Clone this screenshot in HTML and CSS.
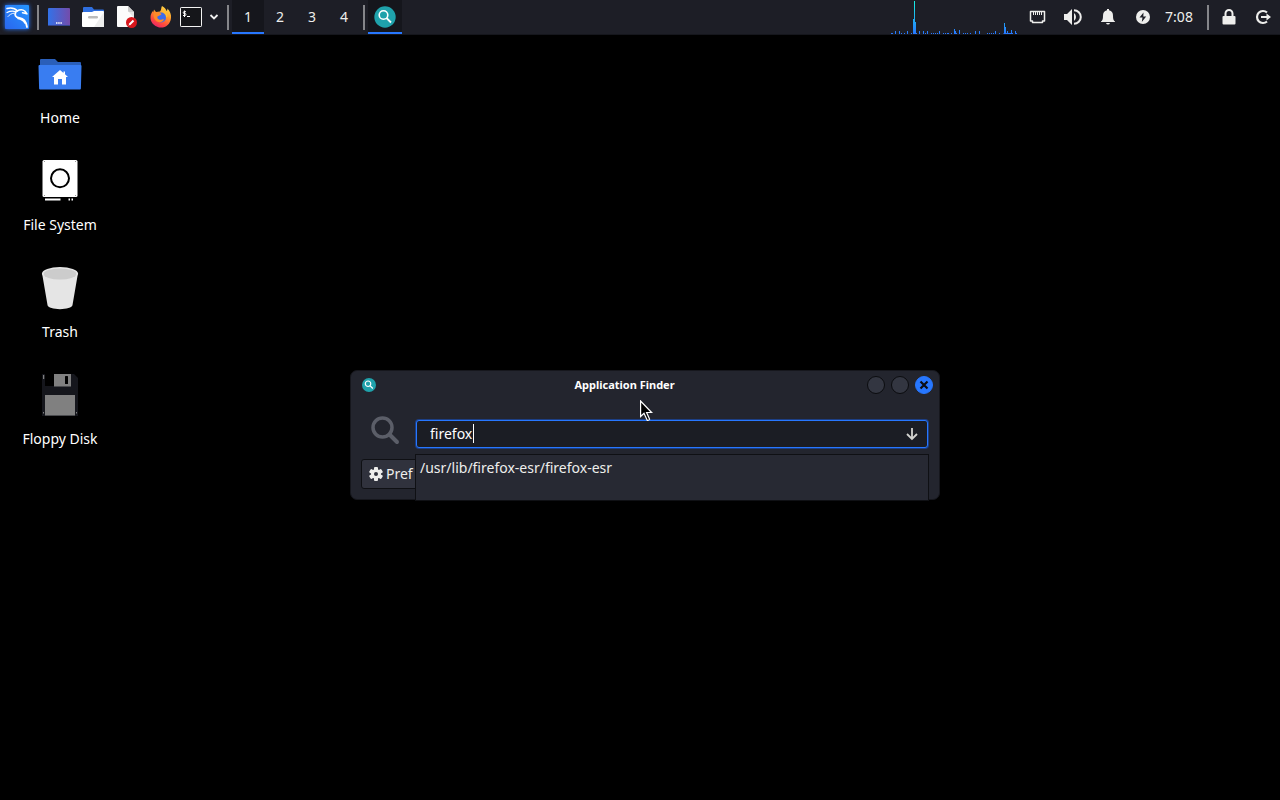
FILE: index.html
```
<!DOCTYPE html>
<html lang="en">
<head>
    <meta charset="UTF-8">
    <meta name="viewport" content="width=device-width, initial-scale=1.0">
    <title>Desktop - Application Finder</title>
    <link rel="stylesheet" href="styles.css">
</head>
<body>
    <!-- Top panel -->
    <header class="panel">
        <button class="launcher" aria-label="Applications menu">
            <svg class="kali" width="34" height="34" viewBox="0 0 34 34">
                <defs>
                    <linearGradient id="kaliBg" x1="0" y1="1" x2="1" y2="0">
                        <stop offset="0" stop-color="#2a66ee"/>
                        <stop offset="1" stop-color="#2596ff"/>
                    </linearGradient>
                </defs>
                <rect x="5" y="5" width="24" height="24" rx="1" fill="url(#kaliBg)"/>
                <g fill="none" stroke="#fff" stroke-linecap="round" stroke-linejoin="round">
                    <path d="M7 8.500c4-1 7.500-.8 10.500 2.500" stroke-width="1.500"/>
                    <path d="M7 12.500c3-1.500 6-1.700 9-.8" stroke-width="1.200"/>
                    <path d="M8 16.500c1.500-2 3.500-3 6-3.300" stroke-width=".9"/>
                    <path d="M17 11c3-1.700 6-1.500 8 .2l2 2.800c-1.500-1-3-1.200-4.500-1.300" stroke-width="1.500"/>
                    <path d="M16 11.500c-2 3.500-.5 6 3.500 6.500s6.500 3 7.500 9" stroke-width="1.800"/>
                    <path d="M18 18.500c3 .5 5.500 2 7 4.500" stroke-width="1.500"/>
                </g>
            </svg>
        </button>
        <span class="separator"></span>
        <button class="launcher" aria-label="Show desktop">
            <svg width="22" height="18" viewBox="0 0 22 18">
                <defs>
                    <linearGradient id="deskBg" x1="0" y1="0" x2="1" y2="0">
                        <stop offset="0" stop-color="#3272e8"/>
                        <stop offset="1" stop-color="#744cab"/>
                    </linearGradient>
                </defs>
                <rect width="22" height="18" rx="1" fill="url(#deskBg)"/>
                <path d="M0 17.500h22" stroke="#34458f"/>
                <path d="M8 15h6" stroke="#fff" stroke-width="1.500" stroke-dasharray="1.500 .7"/>
            </svg>
        </button>
        <button class="launcher" aria-label="File manager">
            <svg width="22" height="20" viewBox="0 0 22 20">
                <path d="M1 1q0-1 1-1h8l2 2.500h9q1 0 1 1V7H1z" fill="#2f6fe0"/>
                <path d="M0 6q0-1 1-1h9l2-1h9q1 0 1 1v14q0 1-1 1H1q-1 0-1-1z" fill="#fff"/>
                <path d="M22 5v15H12z" fill="#eee"/>
                <rect x="6" y="9" width="10" height="2.500" rx="1.200" fill="#bbb"/>
            </svg>
        </button>
        <button class="launcher" aria-label="Text editor">
            <svg width="20" height="22" viewBox="1 0 20 22">
                <path d="M2 0h10l6 6v14q0 1-1 1H2q-1 0-1-1V1q0-1 1-1z" fill="#fcfcfc"/>
                <path d="M12 0l6 6h-5q-1 0-1-1z" fill="#ccc"/>
                <path d="M13 6h5v6z" fill="#e5e5e5"/>
                <circle cx="15.500" cy="16.500" r="5.500" fill="#d8161c"/>
                <path d="M13.500 18.500l4-4" stroke="#fff" stroke-width="2"/>
                <path d="M12.300 19.700l1-2 1 1z" fill="#fff"/>
            </svg>
        </button>
        <button class="launcher" aria-label="Firefox">
            <svg width="22" height="22" viewBox="0 0 22 22">
                <defs>
                    <linearGradient id="foxBody" x1=".8" y1="0" x2=".3" y2="1">
                        <stop offset="0" stop-color="#ffe14a"/>
                        <stop offset=".4" stop-color="#ff9a2b"/>
                        <stop offset=".75" stop-color="#ff4a3d"/>
                        <stop offset="1" stop-color="#e8226a"/>
                    </linearGradient>
                </defs>
                <path d="M12 0c3 1.500 4 3.500 4.500 5 1-.5 1-2 .8-2.500C20 5 21.500 8.500 21 12c-.6 6-5 9.600-10 9.600S.6 17.500.5 12C.4 9 1.500 6.500 3 5l.3 1.500L4 3.500 6 6l4-.5c1.500-1.500 1-4 2-5.500z" fill="url(#foxBody)"/>
                <circle cx="11" cy="11.500" r="5" fill="#3d6cec"/>
                <path d="M4 6.500l5-.2L11.500 8c-1 1.500-3 1.500-4 2.500-.6 1 .2 2.500 1.500 3 2 .8 4-.8 5-.2-1 3-5.500 4-8 1.500C3.500 12.500 3 9 4 6.500z" fill="#ff8a28"/>
                <path d="M11 6c3-.5 5.500 2 5 5.500l1.500-1C17.500 7 15 4 11 6z" fill="#ffc12f"/>
            </svg>
        </button>
        <button class="launcher terminal" aria-label="Terminal">
            <svg width="22" height="20" viewBox="0 0 22 20">
                <rect x=".5" y=".5" width="21" height="19" rx=".7" fill="#15161a" stroke="#f4f4f4"/>
                <path d="M6 4.700H4q-.7 0-.7.700v.4q0 .7.700.7h1.200q.7 0 .7.700v.6q0 .7-.7.700H3M4.500 3.500v6.500" fill="none" stroke="#fff"/>
                <path d="M7 9.500h3" stroke="#fff"/>
            </svg>
        </button>
        <button class="launcher more" aria-label="More terminals">
            <svg width="10" height="6" viewBox="0 0 10 6">
                <path d="M1.500 1L5 4.500 8.500 1" fill="none" stroke="#f0f0f0" stroke-width="1.800"/>
            </svg>
        </button>
        <span class="separator"></span>
        <nav class="workspaces" aria-label="Workspaces">
            <button class="workspace active">1</button>
            <button class="workspace">2</button>
            <button class="workspace">3</button>
            <button class="workspace">4</button>
        </nav>
        <span class="separator"></span>
        <button class="launcher active" aria-label="Application Finder">
            <svg width="22" height="22" viewBox="0 0 22 22">
                <circle cx="11" cy="11" r="10.700" fill="#1fa2ab"/>
                <circle cx="9.500" cy="9" r="4.300" fill="none" stroke="#fff" stroke-width="1.600"/>
                <path d="M12.500 12l4.500 4.500" stroke="#fff" stroke-width="1.800"/>
            </svg>
        </button>

        <!-- CPU graph and status icons -->
        <svg class="graph" width="127" height="34" viewBox="0 0 127 34">
            <defs>
                <linearGradient id="cpu" gradientUnits="userSpaceOnUse" x1="0" y1="34" x2="0" y2="0">
                    <stop offset="0" stop-color="#2777ff"/>
                    <stop offset="1" stop-color="#17f5e0"/>
                </linearGradient>
            </defs>
            <path fill="url(#cpu)" d="M0 33h2v1H0zM4 31h1v3H4zM8 31h1v3H8zM10 33h1v1h-1zM13 33h1v1h-1zM16 31h1v3h-1zM20 33h1v1h-1zM22 19h1V1h1v21h1v11h1v1h-4zM28 31h1v3h-1zM32 31h1v3h-1zM34 33h1v1h-1zM36 31h1v3h-1zM40 33h1v1h-1zM42 33h1v1h-1zM44 33h1v1h-1zM46 33h1v1h-1zM48 31h1v3h-1zM52 33h1v1h-1zM54 33h1v1h-1zM56 33h2v1h-2zM60 33h1v1h-1zM63 29h1v2h1v2h1v1h-3zM68 30h1v4h-1zM72 33h1v1h-1zM74 33h1v1h-1zM76 33h1v1h-1zM79 33h1v1h-1zM84 31h1v3h-1zM88 31h1v3h-1zM96 33h1v1h-1zM98 33h1v1h-1zM100 33h1v1h-1zM102 33h1v1h-1zM104 31h1v3h-1zM108 33h1v1h-1zM112 33h1V23h1v4h1v6h1v-2h1v2h3v-3h1v3h1v1h-9zM124 31h1v2h1v1h-2z"/>
        </svg>
        <button class="tray" aria-label="Network">
            <svg width="17" height="15" viewBox="0 0 17 15">
                <path d="M1.500 1.500h14V11h-2v1.500h-10V11h-2z" fill="none" stroke="#eeeeec" stroke-width="1.500" stroke-linejoin="round"/>
                <path d="M4.500 2v3M6.500 2v3M8.500 2v3M10.500 2v3M12.500 2v3" stroke="#eeeeec"/>
            </svg>
        </button>
        <button class="tray" aria-label="Volume">
            <svg width="18" height="16" viewBox="0 0 18 16">
                <path d="M0 5h3l5-5v16l-5-5H0z" fill="#eeeeec"/>
                <path d="M10 4a5 5 0 0 1 0 8z" fill="#eeeeec"/>
                <path d="M10 1.200a6.800 6.800 0 0 1 0 13.600" fill="none" stroke="#eeeeec" stroke-width="2"/>
            </svg>
        </button>
        <button class="tray" aria-label="Notifications">
            <svg width="14" height="16" viewBox="0 0 14 16">
                <path d="M6 0h2v1.300c3 .5 4 2.700 4 5.700 0 3 .5 4.500 2 5.500V13H0v-.5c1.500-1 2-2.500 2-5.500 0-3 1-5.200 4-5.700zM5 14h4q-.5 1.500-2 1.500T5 14z" fill="#eeeeec"/>
            </svg>
        </button>
        <button class="tray" aria-label="Power manager">
            <svg width="14" height="14" viewBox="0 0 14 14">
                <circle cx="7" cy="7" r="7" fill="#eeeeec"/>
                <path d="M7.500 2.500l-4 5h3l-.7 4.500 4.400-5.500H7.300z" fill="#1d1e26"/>
            </svg>
        </button>
        <time class="clock">7:08</time>
        <span class="separator"></span>
        <button class="launcher" aria-label="Lock screen">
            <svg width="14" height="16" viewBox="0 0 14 16">
                <path d="M3.500 8V4.500a3.500 3.500 0 0 1 7 0V8" fill="none" stroke="#eeeeec" stroke-width="2"/>
                <rect x=".5" y="7" width="13" height="8.500" rx="1" fill="#eeeeec"/>
            </svg>
        </button>
        <button class="launcher" aria-label="Log out">
            <svg width="16" height="16" viewBox="0 0 16 16">
                <path d="M12 3.500A6 6 0 1 0 12 12.500" fill="none" stroke="#eeeeec" stroke-width="2.200"/>
                <path d="M6 7h5.500V4.500L16 8l-4.500 3.500V9H6z" fill="#eeeeec"/>
            </svg>
        </button>
    </header>

    <main class="desktop">
        <!-- Desktop icons -->
        <a class="icon" href="#home">
            <svg width="48" height="48" viewBox="0 0 48 48">
                <path d="M4 10q0-1 1-1h14l3 3h22q1 0 1 1v5H4z" fill="#2a5fba"/>
                <path d="M2.500 16q0-1 1-1h41q1 0 1 1l-.6 22.500q0 1-1 1H4.100q-1 0-1-1z" fill="#397df1"/>
                <path d="M24 20l3.500 3v-1.500H29v2.800l3 2.700h-2v7.500h-4v-5.500h-4v5.500h-4V27h-2z" fill="#fff"/>
            </svg>
            <span>Home</span>
        </a>
        <a class="icon" href="#filesystem">
            <svg width="48" height="48" viewBox="0 0 48 48">
                <rect x="6.500" y="3" width="35" height="37" rx="1.500" fill="#fff"/>
                <circle cx="24" cy="21.300" r="9" fill="none" stroke="#000" stroke-width="2"/>
                <path d="M9 41.500h15.500v2H9zM32.500 41.500h1.500v2h-1.500zM35.500 41.500H37v2h-1.500z" fill="#fff"/>
                <path d="M8 4.500h1M39 4.500h1M8 38.500h1M39 38.500h1" stroke="#999"/>
            </svg>
            <span>File System</span>
        </a>
        <a class="icon" href="#trash">
            <svg width="48" height="48" viewBox="0 0 48 48">
                <path d="M6 9l5.500 32c.5 5.500 24.500 5.500 25 0L42 9z" fill="#e5e5e5"/>
                <ellipse cx="24" cy="9.500" rx="18" ry="6.500" fill="#e5e5e5"/>
                <ellipse cx="24" cy="10" rx="16.300" ry="5.600" fill="#ccc"/>
            </svg>
            <span>Trash</span>
        </a>
        <a class="icon" href="#floppy">
            <svg width="48" height="48" viewBox="0 0 48 48">
                <path d="M6 3h32l4 4v38H6z" fill="#15161c"/>
                <path d="M9 3h9v12H9z" fill="#000"/>
                <path d="M18 3h17v12.500H18z" fill="#808080"/>
                <rect x="29" y="5" width="3" height="8" rx=".5" fill="#000"/>
                <path d="M9 24h30v20.500H9z" fill="#808080"/>
                <path d="M7 4h1.200v4H7zM7 41h1v1.500H7zM40 41h1v1.500h-1z" fill="#808080"/>
            </svg>
            <span>Floppy Disk</span>
        </a>

        <!-- Application Finder window -->
        <section class="window">
            <div class="titlebar">
                <svg width="14" height="14" viewBox="0 0 22 22">
                    <circle cx="11" cy="11" r="11" fill="#1fa2ab"/>
                    <circle cx="9.500" cy="9" r="4.300" fill="none" stroke="#fff" stroke-width="1.800"/>
                    <path d="M12.500 12l4.500 4.500" stroke="#fff" stroke-width="2"/>
                </svg>
                <h1>Application Finder</h1>
                <button class="control" aria-label="Minimize"></button>
                <button class="control" aria-label="Maximize"></button>
                <button class="control close" aria-label="Close">
                    <svg width="10" height="10" viewBox="0 0 10 10">
                        <path d="M1.500 1.500l7 7M8.500 1.500l-7 7" stroke="#0c0e14" stroke-width="2.200"/>
                    </svg>
                </button>
            </div>
            <form class="finder">
                <div class="search">
                    <svg width="30" height="30" viewBox="0 0 30 30">
                        <circle cx="12.500" cy="12.500" r="9.500" fill="none" stroke="#5b5e68" stroke-width="3.500"/>
                        <path d="M19.500 19.500l7.500 7.500" stroke="#5b5e68" stroke-width="4" stroke-linecap="round"/>
                    </svg>
                    <div class="entry">
                        <input type="text" value="firefox" aria-label="Command" spellcheck="false">
                        <span class="caret"></span>
                        <button type="button" class="expand" aria-label="Expand">
                            <svg width="12" height="13" viewBox="0 0 12 13">
                                <path d="M6 0v11M1 6l5 5 5-5" fill="none" stroke="#d3d3d0" stroke-width="1.800"/>
                            </svg>
                        </button>
                        <div class="completion">
                            <a href="#firefox-esr">/usr/lib/firefox-esr/firefox-esr</a>
                        </div>
                    </div>
                </div>
                <button type="button" class="preferences">
                    <svg width="14" height="14" viewBox="0 0 14 14">
                        <g fill="#eeeeec">
                            <rect x="5" width="4" height="14" rx="1"/>
                            <rect x="5" width="4" height="14" rx="1" transform="rotate(60 7 7)"/>
                            <rect x="5" width="4" height="14" rx="1" transform="rotate(120 7 7)"/>
                            <circle cx="7" cy="7" r="5"/>
                        </g>
                        <circle cx="7" cy="7" r="2" fill="#30323d"/>
                    </svg>
                    Pref
                </button>
            </form>
        </section>

        <!-- Mouse pointer -->
        <svg class="pointer" width="14" height="23" viewBox="0 0 14 23">
            <path d="M.6 1v15.500l3.400-3.200 3.200 7q1.500.3 2.400-1.100L6.600 12.500h5z" fill="#000" stroke="#fff" stroke-width="1.200"/>
        </svg>
    </main>
</body>
</html>
```
FILE: styles.css
```
* {
    box-sizing: border-box;
}

body {
    margin: 0;
    min-height: 100vh;
    display: flex;
    flex-direction: column;
    background-color: #000;
    color: #eeeeec;
    font-family: "Noto Sans", sans-serif;
    font-size: 14px;
    line-height: 20px;
    overflow: hidden;
}

button {
    padding: 0;
    border: none;
    background: none;
    color: inherit;
    font: inherit;
}

svg {
    display: block;
    flex: none;
}

/* Top panel */
.panel {
    display: flex;
    height: 35px;
    background-color: #1d1e26;
    border-bottom: 1px solid #15161c;
}

.launcher,
.tray,
.workspace {
    display: flex;
    flex: none;
    align-items: center;
    justify-content: center;
    width: 34px;
}

.tray {
    width: 35px;
}

.launcher.terminal {
    width: 26px;
}

.launcher.more {
    width: 20px;
}

.kali rect {
    filter: drop-shadow(0 0 2px #2777ff);
}

.separator {
    flex: none;
    width: 2px;
    height: 25px;
    margin: 5px 3px;
    background-color: #85868a;
}

.workspaces {
    display: flex;
}

.workspace {
    width: 32px;
}

.launcher.active,
.workspace.active {
    background-color: #15161c;
    box-shadow: inset 0 -2px #2777ff;
}

.graph {
    margin-left: auto;
    margin-right: 2px;
}

.clock {
    width: 44px;
    padding-right: 6px;
    line-height: 34px;
    text-align: center;
}

/* Desktop icons */
.desktop {
    flex: 1;
    display: flex;
    flex-direction: column;
    align-items: flex-start;
    gap: 29px;
    padding-top: 15px;
}

.icon {
    display: flex;
    flex-direction: column;
    align-items: center;
    gap: 10px;
    width: 120px;
    color: #fff;
    text-decoration: none;
}

/* Application Finder window */
.window {
    position: absolute;
    left: 350px;
    top: 370px;
    width: 590px;
    padding-bottom: 10px;
    border: 1px solid #16171d;
    border-radius: 7px;
    background-color: #23252e;
}

.titlebar {
    display: flex;
    align-items: center;
    gap: 6px;
    height: 28px;
    padding: 0 6px 0 11px;
}

.titlebar h1 {
    flex: 1;
    margin: 0;
    padding-left: 6px;
    color: #fff;
    font-size: 11px;
    text-align: center;
}

.control {
    display: flex;
    align-items: center;
    justify-content: center;
    width: 18px;
    height: 18px;
    border: 1px solid #0b0c0f;
    border-radius: 50%;
    background-color: #333641;
}

.control.close {
    border-color: #2777ff;
    background-color: #2777ff;
}

.finder {
    padding: 16px 11px 0 10px;
}

.search {
    display: flex;
    gap: 16px;
    padding-left: 9px;
}

.entry {
    position: relative;
    flex: 1;
    margin-top: 5px;
}

.entry input {
    display: block;
    width: 100%;
    height: 28px;
    padding: 0 34px 2px 13px;
    border: 1px solid #2777ff;
    border-radius: 3px;
    outline: none;
    background-color: #1b1d24;
    box-shadow: 0 0 0 1px #1c3f85;
    color: #fff;
    font: inherit;
}

.caret {
    position: absolute;
    left: 57px;
    top: 4px;
    width: 1px;
    height: 19px;
    background-color: #fff;
}

.expand {
    position: absolute;
    top: 8px;
    right: 10px;
}

.completion {
    position: absolute;
    top: 34px;
    left: -1px;
    right: -1px;
    height: 47px;
    padding: 3px 4px;
    border: 1px solid #0f1014;
    background-color: #272933;
}

.completion a {
    color: #eeeeec;
    text-decoration: none;
}

.preferences {
    display: flex;
    align-items: center;
    gap: 3px;
    height: 30px;
    margin-top: 11px;
    padding: 0 7px;
    border: 1px solid #0f1014;
    border-radius: 3px;
    background-color: #30323d;
}

.pointer {
    position: absolute;
    left: 640px;
    top: 400px;
}
```
